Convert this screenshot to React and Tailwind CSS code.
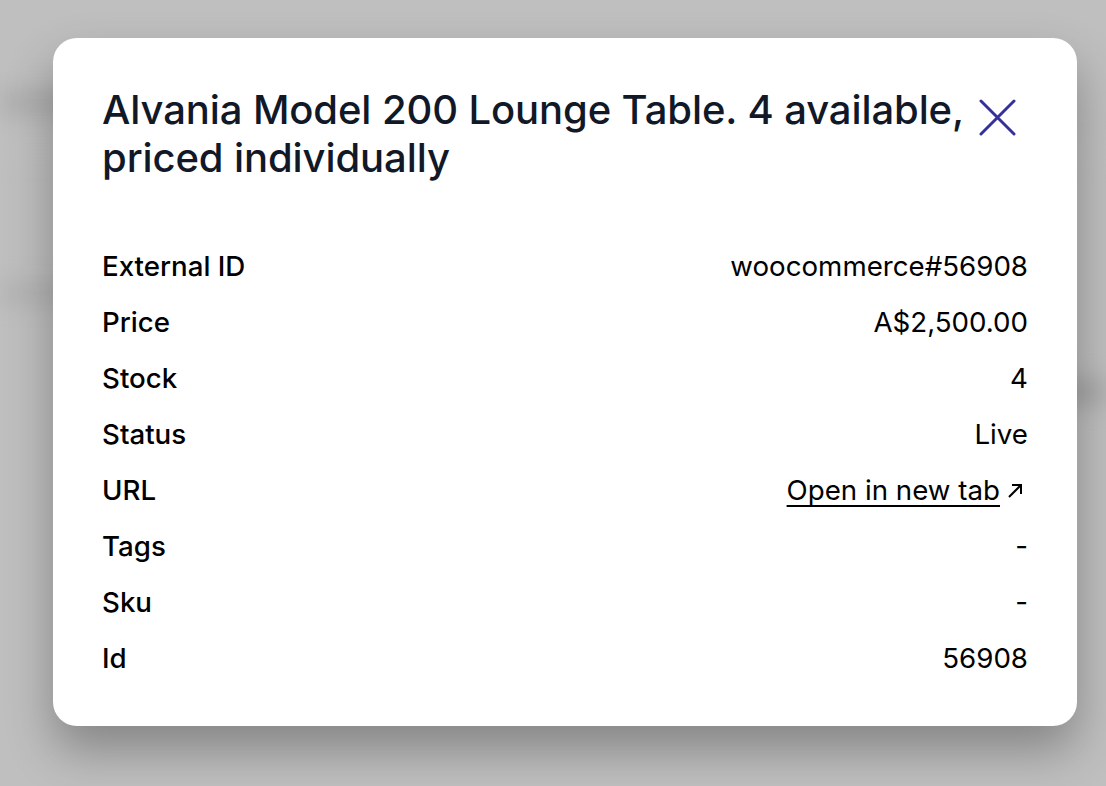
const ROWS = [
  ['External ID', 'woocommerce#56908'],
  ['Price', 'A$2,500.00'],
  ['Stock', '4'],
  ['Status', 'Live'],
  ['URL', null],
  ['Tags', '-'],
  ['Sku', '-'],
  ['Id', '56908'],
]

export default function App() {
  return (
    <div className="relative h-[786px] w-full overflow-hidden bg-[#bfbfbf] font-['Inter',sans-serif]">
      {/* blurred page behind the overlay */}
      <div className="absolute inset-0 blur-md">
        <div className="absolute left-0 top-[92px] h-[20px] w-[110px] bg-[#a9a9a9]" />
        <div className="absolute left-0 top-[150px] h-[4px] w-full bg-[#c7c7c7]" />
        <div className="absolute left-0 top-[285px] h-[16px] w-[90px] bg-[#adadad]" />
        <div className="absolute right-0 top-[380px] h-[24px] w-[50px] bg-[#a3a3a3]" />
      </div>

      <div className="relative ml-[53px] mt-[38px] w-[1024px] rounded-[24px] bg-white px-[49px] pb-[39px] pt-[48px] shadow-[0_24px_48px_rgba(0,0,0,0.3)]">
        <div className="flex items-start justify-between gap-[2px]">
          <h2 className="flex-1 text-[40px] font-medium leading-[48px] tracking-[-0.1px] text-[#111827]">
            Alvania Model 200 Lounge Table. 4 available, priced individually
          </h2>
          <button className="mr-[12px] mt-[13px] shrink-0 text-[#35309c]">
            <svg width="37" height="37" viewBox="0 0 37 37" fill="none" stroke="currentColor" strokeWidth="3" strokeLinecap="round">
              <path d="M2 2 L35 35 M35 2 L2 35" />
            </svg>
          </button>
        </div>

        <div className="mt-[57px] flex flex-col">
          {ROWS.map(([label, value]) => (
            <div key={label} className="flex h-[56px] items-center justify-between text-[27.7px] text-black">
              <span className="font-medium">{label}</span>
              {value === null ? (
                <a href="#" className="flex items-center gap-[6px]">
                  <span className="underline decoration-[2px] underline-offset-[5px]">Open in new tab</span>
                  <svg width="22" height="22" viewBox="0 0 22 22" fill="none" stroke="currentColor" strokeWidth="2">
                    <path d="M3 17 L15 5 M6 5 H15 V14" />
                  </svg>
                </a>
              ) : (
                <span>{value}</span>
              )}
            </div>
          ))}
        </div>
      </div>
    </div>
  )
}
